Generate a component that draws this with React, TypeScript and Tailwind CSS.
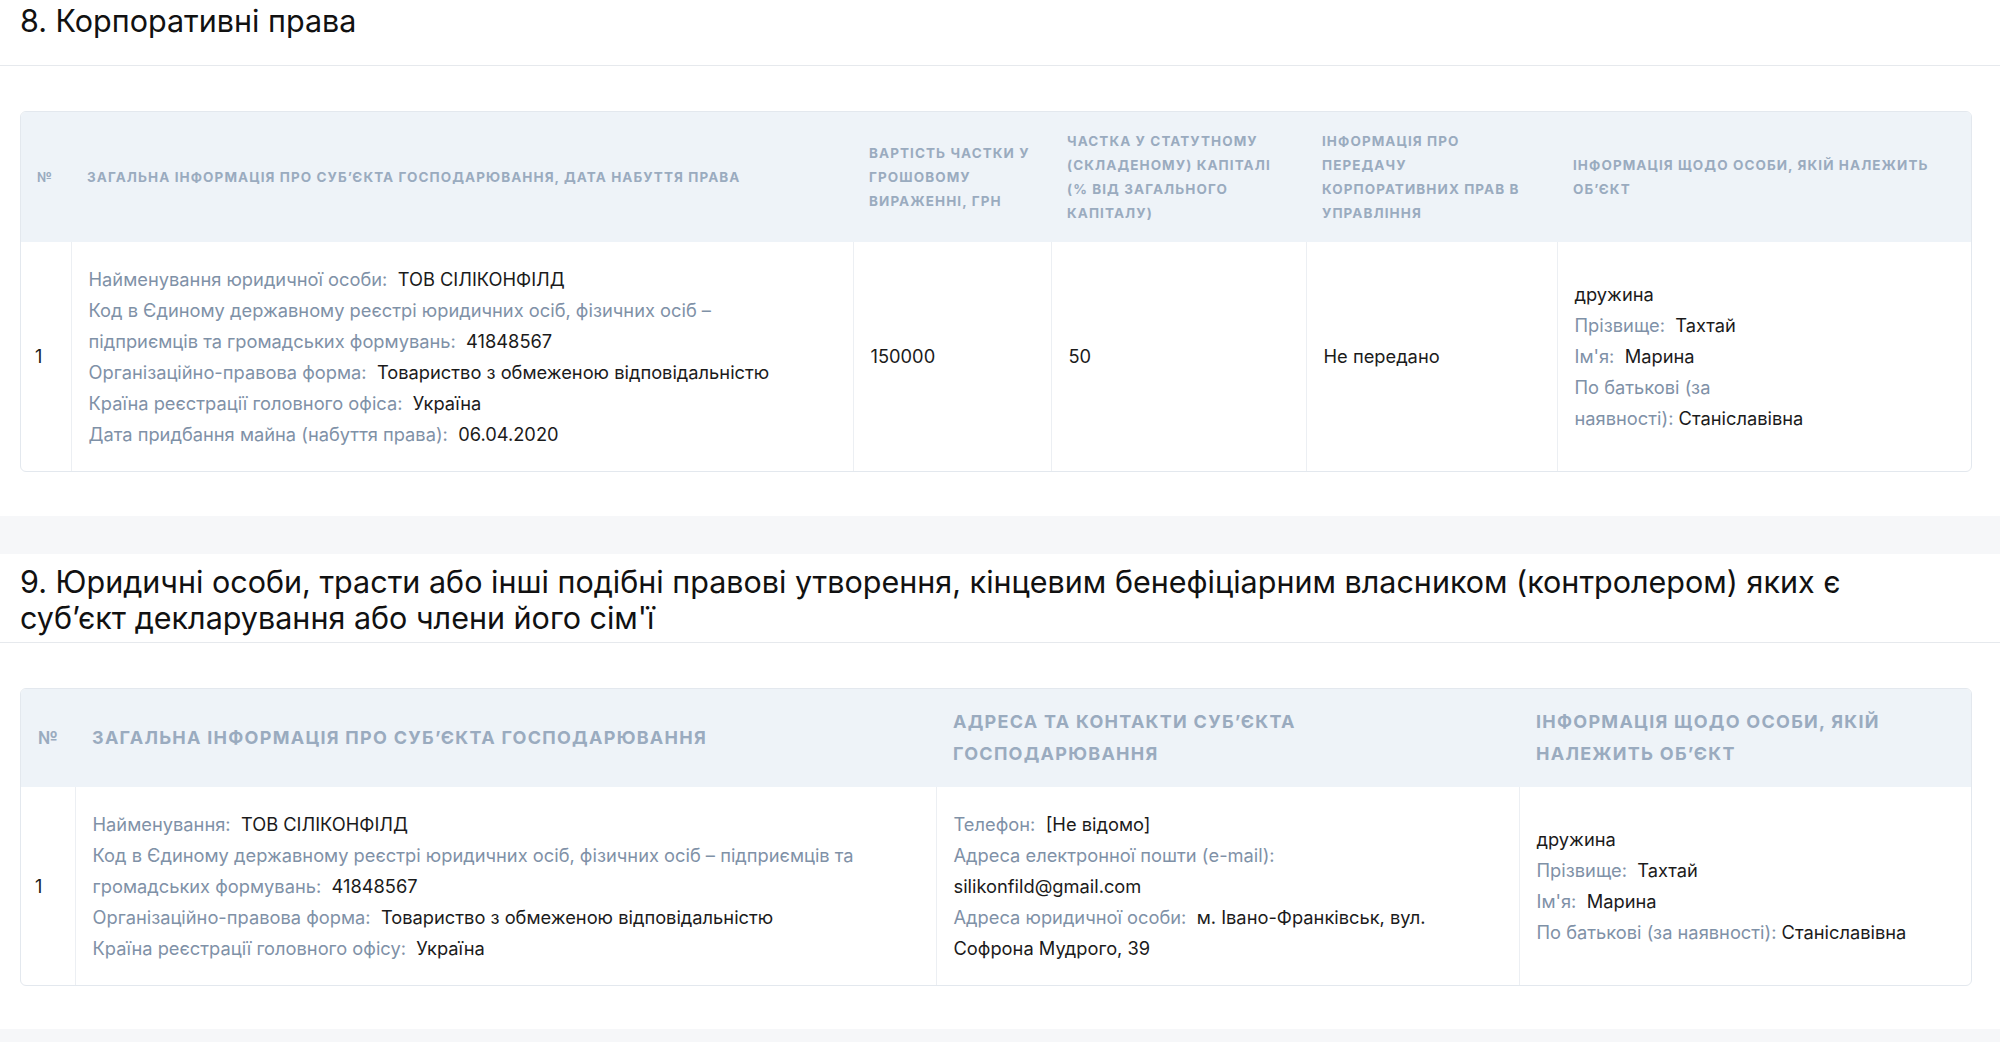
import React from "react";

const F = { fontFamily: "Inter, 'Open Sans', sans-serif" };

function L({ label, value }: { label: string; value?: string }) {
  return (
    <div>
      <span className="text-[#7f91a7]">{label}</span>
      {value !== undefined && <span className="text-[#1b1b1b]">&nbsp; {value}</span>}
    </div>
  );
}

const th1 = "px-[16px] text-left align-middle font-bold uppercase text-[13.5px] leading-[24px] tracking-[0.08em] text-[#9aabbf]";
const th2 = "px-[17px] text-left align-middle font-bold uppercase text-[18px] leading-[32px] tracking-[0.07em] text-[#9aabbf]";
const td = "px-[17px] align-middle border-l border-[#eceff3] text-[18.3px] leading-[31px] text-[#1b1b1b]";

export default function App() {
  return (
    <div style={F} className="w-[2000px] h-[1042px] overflow-hidden bg-white">
      <div className="h-[66px] border-b border-[#e6e9ed] px-[20px] pt-[3px]">
        <h2 className="text-[30.5px] leading-[36px] text-[#111]">8. Корпоративні права</h2>
      </div>
      <div className="px-[20px] pt-[45px] h-[450px]">
        <div className="border border-[#e3e8ee] rounded-[6px] overflow-hidden w-[1952px]">
          <table className="w-full border-collapse table-fixed">
            <colgroup>
              <col className="w-[50px]" />
              <col className="w-[782px]" />
              <col className="w-[198px]" />
              <col className="w-[255px]" />
              <col className="w-[251px]" />
              <col />
            </colgroup>
            <thead>
              <tr className="h-[130px] bg-[#eef3f8]">
                <th className={th1}>№</th>
                <th className={th1}>Загальна інформація про суб’єкта господарювання, дата набуття права</th>
                <th className={th1}>Вартість частки у грошовому вираженні, грн</th>
                <th className={th1}>Частка у статутному (складеному) капіталі (% від загального капіталу)</th>
                <th className={th1}>Інформація про передачу корпоративних прав в управління</th>
                <th className={th1}>Інформація щодо особи, якій належить об’єкт</th>
              </tr>
            </thead>
            <tbody>
              <tr className="h-[229px]">
                <td className="px-[14px] align-middle text-[18px] text-[#1b1b1b]">1</td>
                <td className={td}>
                  <L label="Найменування юридичної особи:" value="ТОВ СІЛІКОНФІЛД" />
                  <div>
                    <span className="text-[#7f91a7]">Код в Єдиному державному реєстрі юридичних осіб, фізичних осіб –<br />підприємців та громадських формувань:</span>
                    <span>&nbsp; 41848567</span>
                  </div>
                  <L label="Організаційно-правова форма:" value="Товариство з обмеженою відповідальністю" />
                  <L label="Країна реєстрації головного офіса:" value="Україна" />
                  <L label="Дата придбання майна (набуття права):" value="06.04.2020" />
                </td>
                <td className={td}>150000</td>
                <td className={td}>50</td>
                <td className={td}>Не передано</td>
                <td className={td}>
                  <div>дружина</div>
                  <L label="Прізвище:" value="Тахтай" />
                  <L label="Ім'я:" value="Марина" />
                  <div>
                    <span className="text-[#7f91a7]">По батькові (за<br />наявності):</span> Станіславівна
                  </div>
                </td>
              </tr>
            </tbody>
          </table>
        </div>
      </div>
      <div className="h-[38px] bg-[#f6f7f9]" />
      <div className="h-[89px] border-b border-[#e6e9ed] px-[20px] pt-[10px]">
        <h2 className="text-[30.5px] leading-[36px] text-[#111]">
          9. Юридичні особи, трасти або інші подібні правові утворення, кінцевим бенефіціарним власником (контролером) яких є<br />суб’єкт декларування або члени його сім'ї
        </h2>
      </div>
      <div className="px-[20px] pt-[45px] h-[386px]">
        <div className="border border-[#e3e8ee] rounded-[6px] overflow-hidden w-[1952px]">
          <table className="w-full border-collapse table-fixed">
            <colgroup>
              <col className="w-[54px]" />
              <col className="w-[861px]" />
              <col className="w-[583px]" />
              <col />
            </colgroup>
            <thead>
              <tr className="h-[98px] bg-[#eef3f8]">
                <th className={th2}>№</th>
                <th className={th2}>Загальна інформація про суб’єкта господарювання</th>
                <th className={th2}>Адреса та контакти суб’єкта<br />господарювання</th>
                <th className={th2}>Інформація щодо особи, якій<br />належить об’єкт</th>
              </tr>
            </thead>
            <tbody>
              <tr className="h-[198px]">
                <td className="px-[14px] align-middle text-[18px] text-[#1b1b1b]">1</td>
                <td className={td}>
                  <L label="Найменування:" value="ТОВ СІЛІКОНФІЛД" />
                  <div>
                    <span className="text-[#7f91a7]">Код в Єдиному державному реєстрі юридичних осіб, фізичних осіб – підприємців та<br />громадських формувань:</span>
                    <span>&nbsp; 41848567</span>
                  </div>
                  <L label="Організаційно-правова форма:" value="Товариство з обмеженою відповідальністю" />
                  <L label="Країна реєстрації головного офісу:" value="Україна" />
                </td>
                <td className={td}>
                  <L label="Телефон:" value="[Не відомо]" />
                  <div className="text-[#7f91a7]">Адреса електронної пошти (e-mail):</div>
                  <div>silikonfild@gmail.com</div>
                  <div>
                    <span className="text-[#7f91a7]">Адреса юридичної особи:</span>&nbsp; м. Івано-Франківськ, вул.<br />Софрона Мудрого, 39
                  </div>
                </td>
                <td className={td}>
                  <div>дружина</div>
                  <L label="Прізвище:" value="Тахтай" />
                  <L label="Ім'я:" value="Марина" />
                  <div>
                    <span className="text-[#7f91a7]">По батькові (за наявності):</span> Станіславівна
                  </div>
                </td>
              </tr>
            </tbody>
          </table>
        </div>
      </div>
      <div className="h-[20px] bg-[#f6f7f9]" />
    </div>
  );
}
